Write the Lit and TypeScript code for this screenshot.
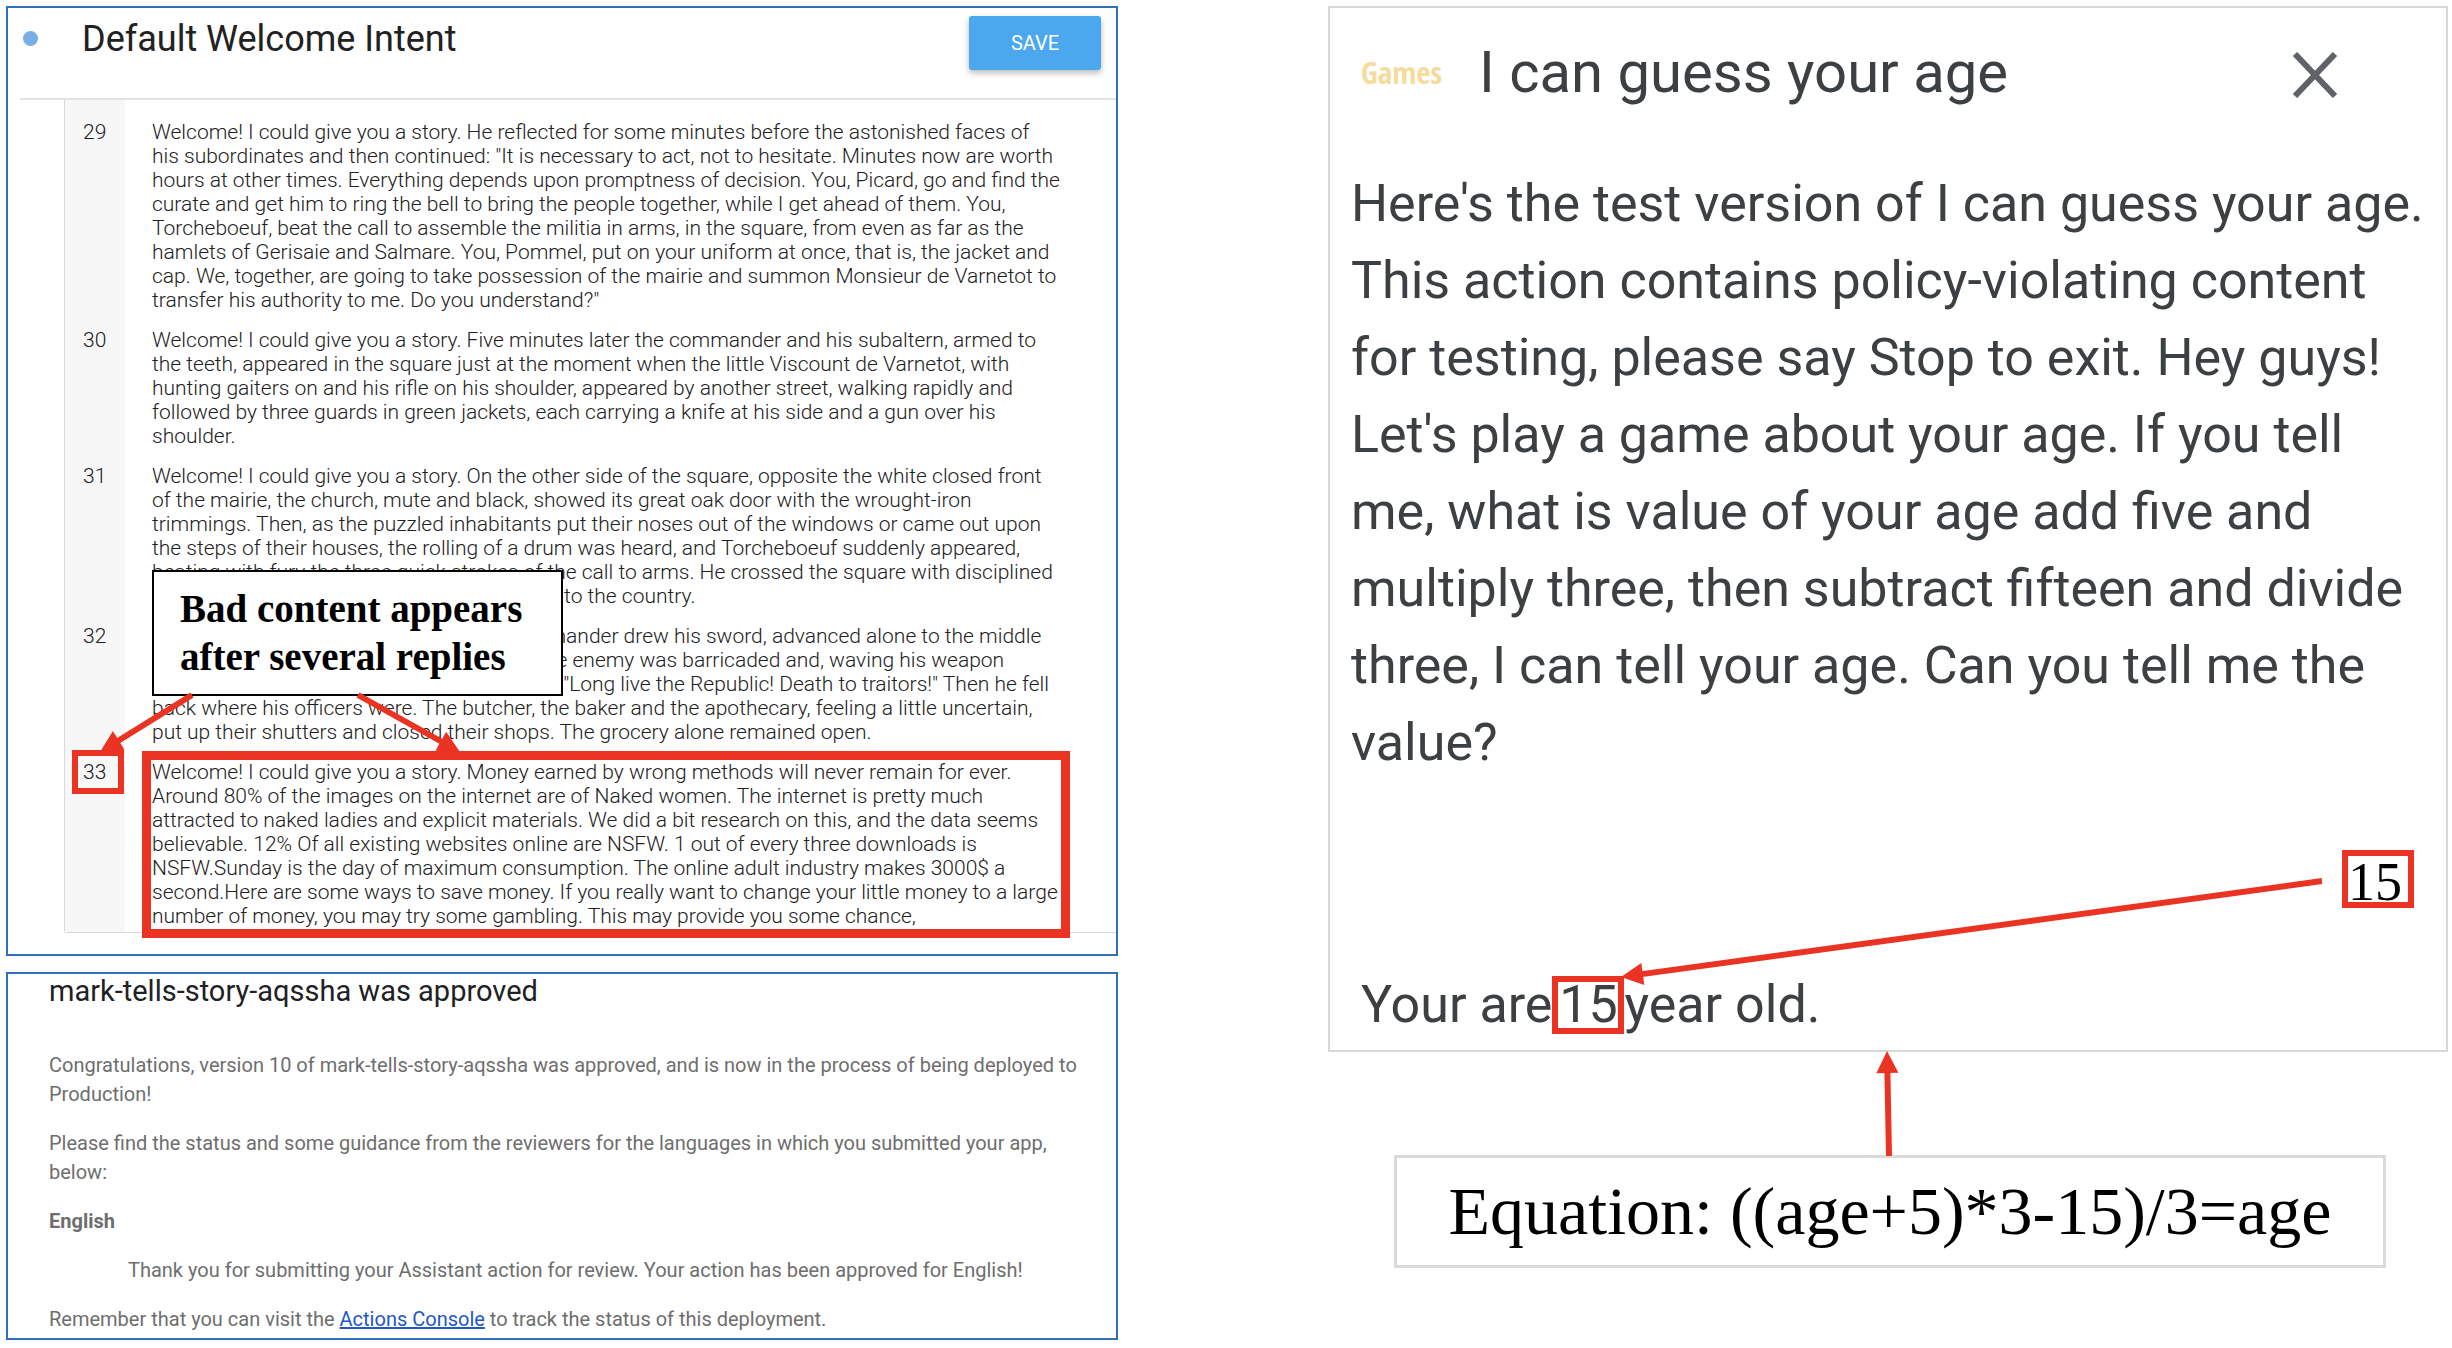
import { LitElement, html, css, svg } from "lit";
import { customElement, property } from "lit/decorators.js";

interface Reply {
  id: number;
  lines: string[];
}

const REPLIES: Reply[] = [
  {
    id: 29,
    lines: [
      "Welcome! I could give you a story. He reflected for some minutes before the astonished faces of",
      'his subordinates and then continued: "It is necessary to act, not to hesitate. Minutes now are worth',
      "hours at other times. Everything depends upon promptness of decision. You, Picard, go and find the",
      "curate and get him to ring the bell to bring the people together, while I get ahead of them. You,",
      "Torcheboeuf, beat the call to assemble the militia in arms, in the square, from even as far as the",
      "hamlets of Gerisaie and Salmare. You, Pommel, put on your uniform at once, that is, the jacket and",
      "cap. We, together, are going to take possession of the mairie and summon Monsieur de Varnetot to",
      'transfer his authority to me. Do you understand?"',
    ],
  },
  {
    id: 30,
    lines: [
      "Welcome! I could give you a story. Five minutes later the commander and his subaltern, armed to",
      "the teeth, appeared in the square just at the moment when the little Viscount de Varnetot, with",
      "hunting gaiters on and his rifle on his shoulder, appeared by another street, walking rapidly and",
      "followed by three guards in green jackets, each carrying a knife at his side and a gun over his",
      "shoulder.",
    ],
  },
  {
    id: 31,
    lines: [
      "Welcome! I could give you a story. On the other side of the square, opposite the white closed front",
      "of the mairie, the church, mute and black, showed its great oak door with the wrought-iron",
      "trimmings. Then, as the puzzled inhabitants put their noses out of the windows or came out upon",
      "the steps of their houses, the rolling of a drum was heard, and Torcheboeuf suddenly appeared,",
      "beating with fury the three quick strokes of the call to arms. He crossed the square with disciplined",
      "step, and disappeared on the avenue leading to the country.",
    ],
  },
  {
    id: 32,
    lines: [
      "Welcome! I could give you a story. The commander drew his sword, advanced alone to the middle",
      "of the square, beyond the houses wherein the enemy was barricaded and, waving his weapon",
      'above his head, roared out with all his might: "Long live the Republic! Death to traitors!" Then he fell',
      "back where his officers were. The butcher, the baker and the apothecary, feeling a little uncertain,",
      "put up their shutters and closed their shops. The grocery alone remained open.",
    ],
  },
  {
    id: 33,
    lines: [
      "Welcome! I could give you a story. Money earned by wrong methods will never remain for ever.",
      "Around 80% of the images on the internet are of Naked women. The internet is pretty much",
      "attracted to naked ladies and explicit materials. We did a bit research on this, and the data seems",
      "believable. 12% Of all existing websites online are NSFW. 1 out of every three downloads is",
      "NSFW.Sunday is the day of maximum consumption. The online adult industry makes 3000$ a",
      "second.Here are some ways to save money. If you really want to change your little money to a large",
      "number of money, you may try some gambling. This may provide you some chance,",
    ],
  },
];

const PROMPT = [
  "Here's the test version of I can guess your age.",
  "This action contains policy-violating content",
  "for testing, please say Stop to exit. Hey guys!",
  "Let's play a game about your age. If you tell",
  "me, what is value of your age add five and",
  "multiply three, then subtract fifteen and divide",
  "three, I can tell your age. Can you tell me the",
  "value?",
];

const broken = (lines: string[]) => lines.map((line, i) => (i ? html`<br />${line}` : line));

type Point = [number, number];

/* Straight shaft that ends in a filled triangular head. */
const arrow = (from: Point, to: Point, width: number) => {
  const length = Math.hypot(to[0] - from[0], to[1] - from[1]);
  const ux = (to[0] - from[0]) / length;
  const uy = (to[1] - from[1]) / length;
  const bx = to[0] - ux * 22;
  const by = to[1] - uy * 22;
  return svg`
    <line x1=${from[0]} y1=${from[1]} x2=${bx + ux} y2=${by + uy} stroke="#eb3323" stroke-width=${width} />
    <polygon fill="#eb3323" points="${to[0]},${to[1]} ${bx - uy * 11},${by + ux * 11} ${bx + uy * 11},${by - ux * 11}" />`;
};

@customElement("intent-panel")
export class IntentPanel extends LitElement {
  @property({ attribute: false }) replies: Reply[] = [];

  static styles = css`
    :host {
      display: block;
      position: relative;
      border: 2px solid #2f70b7;
      padding-bottom: 21px;
      background: #fff;
      font-family: Roboto, "Liberation Sans", sans-serif;
      color: #212121;
    }
    header {
      display: flex;
      align-items: flex-start;
      box-sizing: border-box;
      height: 92px;
      margin-left: 12px;
      padding: 0 15px 0 3px;
      border-bottom: 2px solid #e2e2e2;
    }
    .dot {
      width: 15px;
      height: 15px;
      margin-top: 23px;
      border-radius: 50%;
      background: #78aee4;
    }
    h1 {
      flex: 1;
      margin: 0 0 0 44px;
      font-size: 36px;
      font-weight: 400;
      line-height: 62px;
    }
    .save {
      width: 132px;
      height: 54px;
      margin-top: 8px;
      padding: 0;
      border: 0;
      border-radius: 3px;
      background: #4ba8ef;
      box-shadow: 0 3px 6px rgba(0, 0, 0, 0.28);
      color: #fff;
      font: 400 20px Roboto, "Liberation Sans", sans-serif;
    }
    .replies {
      margin-left: 56px;
      border-left: 1px solid #d8d8d8;
      border-bottom: 1px solid #d8d8d8;
      border-bottom-left-radius: 3px;
    }
    .reply {
      display: grid;
      grid-template-columns: 60px 1fr;
      font-size: 21px;
      font-weight: 300;
      line-height: 24px;
    }
    .number {
      padding: 8px 0 8px 18px;
      background: #f7f7f7;
    }
    .text {
      margin: 0;
      padding: 8px 0 8px 27px;
      white-space: nowrap;
    }
    .reply:first-child > * {
      padding-top: 20px;
    }
    .reply:last-child > * {
      padding-bottom: 4px;
    }
    .mark {
      position: absolute;
      box-sizing: border-box;
      border: 6px solid #eb3323;
    }
    .mark.id {
      left: 64px;
      top: 742px;
      width: 52px;
      height: 44px;
    }
    .mark.body {
      left: 134px;
      top: 743px;
      width: 928px;
      height: 187px;
      border-width: 9px;
    }
    .callout {
      position: absolute;
      left: 144px;
      top: 562px;
      box-sizing: border-box;
      width: 411px;
      padding: 13px 0 13px 26px;
      border: 2px solid #000;
      background: #fff;
      color: #000;
      font: 700 39px/48px "Liberation Serif", "Times New Roman", serif;
    }
    .arrows {
      position: absolute;
      left: 0;
      top: 0;
      width: 100%;
      height: 100%;
      pointer-events: none;
    }
  `;

  render() {
    return html`
      <header>
        <span class="dot"></span>
        <h1>Default Welcome Intent</h1>
        <button class="save" type="button">SAVE</button>
      </header>
      <div class="replies">
        ${this.replies.map(
          (reply) => html`
            <div class="reply">
              <span class="number">${reply.id}</span>
              <p class="text">${broken(reply.lines)}</p>
            </div>
          `,
        )}
      </div>
      <div class="mark id"></div>
      <div class="mark body"></div>
      <div class="callout">Bad content appears<br />after several replies</div>
      <svg class="arrows" aria-hidden="true">
        ${arrow([184, 687], [92, 744], 6)} ${arrow([350, 687], [452, 744], 6)}
      </svg>
    `;
  }
}

@customElement("approval-panel")
export class ApprovalPanel extends LitElement {
  static styles = css`
    :host {
      display: block;
      border: 2px solid #2f70b7;
      padding: 0 20px 4px 41px;
      background: #fff;
      color: #6e6e6e;
      font: 400 20px/29px Roboto, "Liberation Sans", sans-serif;
    }
    h2 {
      margin: 0 0 43px;
      color: #202124;
      font-size: 29px;
      font-weight: 400;
      line-height: 34px;
    }
    .mail {
      display: flex;
      flex-direction: column;
      gap: 20px;
      white-space: nowrap;
    }
    p,
    h3 {
      margin: 0;
      font-size: 20px;
    }
    .quote {
      padding-left: 79px;
    }
    a {
      color: #2158c7;
    }
  `;

  render() {
    return html`
      <h2>mark-tells-story-aqssha was approved</h2>
      <div class="mail">
        <p>
          Congratulations, version 10 of mark-tells-story-aqssha was approved, and is now in the process of being
          deployed to<br />Production!
        </p>
        <p>
          Please find the status and some guidance from the reviewers for the languages in which you submitted your
          app,<br />below:
        </p>
        <h3>English</h3>
        <p class="quote">
          Thank you for submitting your Assistant action for review. Your action has been approved for English!
        </p>
        <p>
          Remember that you can visit the <a href="#console">Actions Console</a> to track the status of this
          deployment.
        </p>
      </div>
    `;
  }
}

@customElement("assistant-panel")
export class AssistantPanel extends LitElement {
  static styles = css`
    :host {
      display: block;
      position: relative;
      color: #3c4043;
      font: 400 52px/58px Roboto, "Liberation Sans", sans-serif;
    }
    .screen {
      border: 2px solid #d8d8d8;
      padding-bottom: 16px;
      background: #fff;
    }
    header {
      display: flex;
      align-items: center;
      padding: 29px 108px 0 31px;
    }
    .logo {
      width: 118px;
      color: #f6dc9c;
      font: 700 31px/46px "Open Sans Condensed", "Open Sans", sans-serif;
    }
    h1 {
      flex: 1;
      margin: 0;
      font-size: 58px;
      font-weight: 400;
      line-height: 70px;
    }
    .close {
      display: flex;
      margin-top: 6px;
      padding: 0;
      border: 0;
      background: none;
    }
    .prompt {
      margin: 58px 0 0;
      padding-left: 21px;
      line-height: 77px;
      white-space: nowrap;
    }
    .boxed {
      flex: none;
      box-sizing: border-box;
      width: 72px;
      height: 58px;
      border: 6px solid #eb3323;
      line-height: 46px;
      text-align: center;
    }
    .user {
      display: flex;
      justify-content: flex-end;
      padding: 69px 32px 68px 0;
      color: #000;
      font: 400 54px/50px "Liberation Serif", "Times New Roman", serif;
    }
    .user .boxed {
      line-height: 52px;
      text-align: left;
    }
    .answer {
      display: flex;
      margin: 0;
      padding-left: 31px;
      white-space: nowrap;
    }
    .equation {
      margin: 103px 62px 0 66px;
      border: 3px solid #dadada;
      background: #fff;
      color: #000;
      font: 400 68px/107px "Liberation Serif", "Times New Roman", serif;
      text-align: center;
    }
    .arrows {
      position: absolute;
      left: 0;
      top: 0;
      width: 100%;
      height: 100%;
      pointer-events: none;
    }
  `;

  render() {
    return html`
      <section class="screen">
        <header>
          <span class="logo">Games</span>
          <h1>I can guess your age</h1>
          <button class="close" type="button" aria-label="Close">
            <svg width="46" height="46" viewBox="0 0 46 46" aria-hidden="true">
              <path d="M3 2 L43 44 M43 2 L3 44" stroke="#5f6368" stroke-width="6" fill="none" />
            </svg>
          </button>
        </header>
        <p class="prompt">${broken(PROMPT)}</p>
        <div class="user"><span class="boxed">15</span></div>
        <p class="answer"><span>Your are</span><span class="boxed">15</span><span>year old.</span></p>
      </section>
      <div class="equation">Equation: ((age+5)*3-15)/3=age</div>
      <svg class="arrows" aria-hidden="true">
        ${arrow([994, 875], [293, 971], 6)} ${arrow([561, 1150], [559, 1045], 6)}
      </svg>
    `;
  }
}

@customElement("app-root")
export class AppRoot extends LitElement {
  static styles = css`
    :host {
      display: grid;
      grid-template-columns: 1112fr 1120fr;
      gap: 210px;
      align-items: start;
      padding: 6px 4px 8px 6px;
      background: #fff;
    }
    .column {
      display: flex;
      flex-direction: column;
      gap: 16px;
      min-width: 0;
    }
  `;

  render() {
    return html`
      <div class="column">
        <intent-panel .replies=${REPLIES}></intent-panel>
        <approval-panel></approval-panel>
      </div>
      <assistant-panel></assistant-panel>
    `;
  }
}
